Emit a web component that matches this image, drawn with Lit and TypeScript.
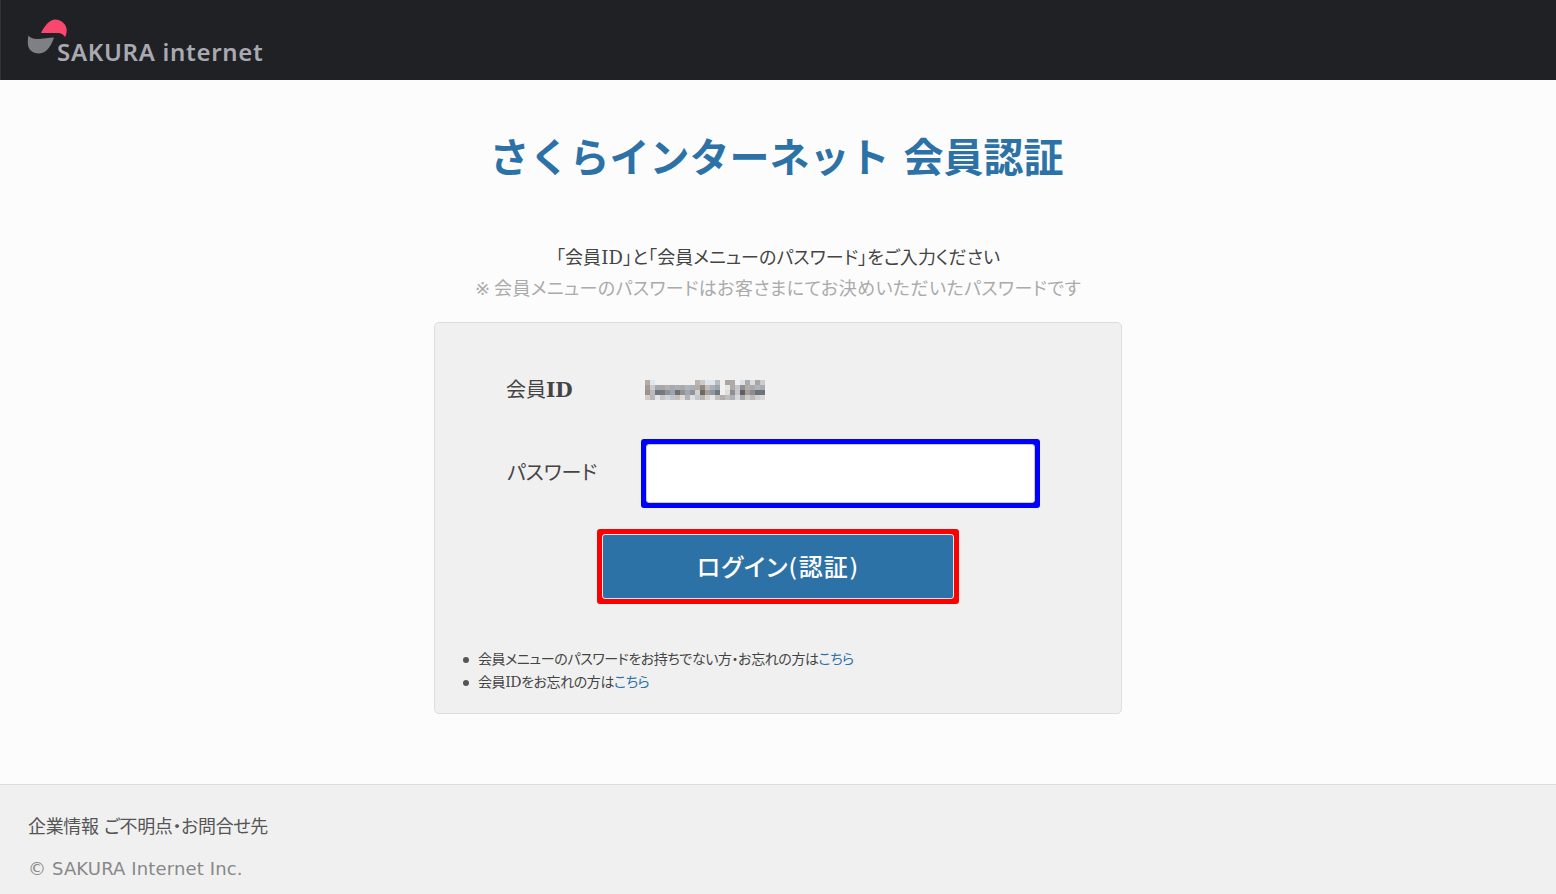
import { LitElement, html, css, svg } from "lit";
import { customElement } from "lit/decorators.js";

const MOSAIC: string[][] = [
  "b5aba4 dde6ee f0f0f0 f0f0f0 f0f0f0 f0f0f0 f0f0f0 f0f0f0 f0f0f0 f0f0f0 bdb3ad c9c9c8 dfe5ea dfe5ea b5bcc4 f0f0f0 aba5a0 b0aaa6 f0f0f0 e0e0e0 a5adb4 dcdcdc a9a5a2 c8cdd2".split(" "),
  "a39a94 c9cccd a2a8ad a9a7a6 b4b0ac a5aab0 b2aeaa a6abb0 b3b5b8 a9b0b7 b3aba4 8f8a86 c4bcb5 a8b0b8 a0a4a8 f0f0f0 e6e6e6 b0aaa6 c4c6c8 8f9094 b5aea8 a9aaac b2b5b8 a8adb4".split(" "),
  "9b928c b8bbbe 6f767d 747a80 8e9298 9ca4ac 6f7074 8f9296 a0a8b0 8e959c d4d0cc 6c6864 a8a098 8c98a4 707880 f0f0f0 e0dcdc 8c8e94 c8c8c8 5c5e64 a89e96 8c8c8e 6c7078 6f747c".split(" "),
  "d2cdc8 b4b6b8 e4e4e4 c8c6c4 d0d4d8 bcc6d0 c8c0b8 e0dcd8 aeb4ba e0e0e0 c4c8cc b8b4b0 d8d4d0 e4e6e8 c4c0bc b0aeac c0bcb8 aeb2b6 d8d8d8 a8a8aa cccccc bcb8b4 d0d0d0 d8d8d8".split(" "),
];

@customElement("app-root")
export class AppRoot extends LitElement {
  static styles = css`
    :host {
      display: flex;
      flex-direction: column;
      min-height: 894px;
      background: #fcfcfc;
      color: #444;
      font-family: "DejaVu Sans", "Noto Sans CJK JP", sans-serif;
      font-feature-settings: "palt";
    }
    .top {
      height: 80px;
      box-sizing: border-box;
      background: #202124;
      border-left: 1px solid #333;
      position: relative;
    }
    .logo-mark {
      position: absolute;
      left: -1px;
      top: 0;
    }
    .logo-text {
      position: absolute;
      left: 56px;
      top: 38px;
      font-size: 24px;
      line-height: 28px;
      font-weight: 600;
      color: #a9a9b2;
      font-family: "Noto Sans", sans-serif;
      white-space: nowrap;
      letter-spacing: 0.7px;
    }
    main {
      flex: 1;
      display: flex;
      flex-direction: column;
      align-items: center;
    }
    h1 {
      margin: 50px 3px 0 0;
      height: 56px;
      font-size: 40px;
      line-height: 56px;
      font-weight: 700;
      color: #2d72a7;
      white-space: nowrap;
      font-feature-settings: normal;
    }
    .intro {
      margin: 56px 0 0;
      font-size: 18px;
      line-height: 31px;
      text-align: center;
      white-space: nowrap;
      letter-spacing: 0.1px;
    }
    .intro .note {
      color: #aaa;
      display: block;
      letter-spacing: 0.42px;
    }
    .mark {
      letter-spacing: 4px;
    }
    .id {
      font-family: "DejaVu Serif", serif;
    }
    .panel {
      box-sizing: border-box;
      width: 688px;
      height: 392px;
      margin-top: 18px;
      background: #f0f0f0;
      border: 1px solid #ddd;
      border-radius: 5px;
      display: flex;
      flex-direction: column;
      padding: 49px 0 0 71px;
    }
    .row {
      display: grid;
      grid-template-columns: 135px 1fr;
      align-items: center;
      font-size: 20px;
      line-height: 36px;
    }
    .row b {
      font-family: "DejaVu Serif", serif;
      font-weight: 700;
    }
    .pw-label {
      margin: 0 0 2px 1px;
    }
    .mosaic {
      display: grid;
      grid-template-columns: repeat(24, 5px);
      grid-auto-rows: 5px;
      width: 120px;
      margin-left: 4px;
    }
    .input-row {
      margin-top: 31px;
    }
    .frame {
      border-radius: 3px;
      padding: 5px;
      justify-self: start;
    }
    .frame.blue {
      background: #00f;
    }
    .frame.red {
      background: #f00;
    }
    .input {
      box-sizing: border-box;
      width: 389px;
      height: 59px;
      background: #fff;
      border: 1px solid #ccc;
      border-radius: 3px;
      display: block;
      padding: 0;
      outline: none;
    }
    .btn-row {
      display: flex;
      margin: 21px 0 0 91px;
    }
    .btn {
      box-sizing: border-box;
      display: block;
      width: 352px;
      height: 65px;
      background: #2d72a7;
      border: 1px solid #e6e6e6;
      border-radius: 3px;
      color: #fff;
      font-family: inherit;
      font-feature-settings: inherit;
      font-size: 24px;
      font-weight: 500;
      letter-spacing: 1px;
      padding: 0 0 2px;
    }
    ul {
      margin: 44px 0 0 -43px;
      padding: 0;
      font-size: 14px;
      line-height: 23px;
      color: #444;
      list-style: none;
      letter-spacing: -0.42px;
    }
    li {
      display: flex;
      align-items: center;
      gap: 9px;
    }
    li::before {
      content: "";
      width: 6px;
      height: 6px;
      border-radius: 50%;
      background: #555;
    }
    a {
      color: #2d72a7;
      text-decoration: none;
    }
    footer {
      box-sizing: border-box;
      height: 110px;
      background: #f0f0f0;
      border-top: 1px solid #ddd;
      padding: 27px 0 0 28px;
    }
    .links {
      font-size: 18px;
      line-height: 30px;
      color: #555;
      letter-spacing: -0.35px;
    }
    .copy {
      margin-top: 12px;
      font-size: 18px;
      line-height: 30px;
      color: #888;
      white-space: nowrap;
      letter-spacing: 0.14px;
    }
  `;

  private logo() {
    return html`<svg class="logo-mark" width="80" height="60" viewBox="0 0 80 60">
      ${svg`<path fill="#f9476f" d="M41 33 C45 25 50 19.5 55 19.5 C62 19.5 66.7 25 66.7 30 C66.7 33 66 35.5 65 37 C63.5 35 61.5 33.3 59 33 C53 32.6 47 33.4 41 33 Z"/>`}
      ${svg`<path fill="#7f7f86" d="M28.5 35.5 C30 37.5 33 39 37 39 C43 39 49 37.5 54 37.5 C52 44 47 53.5 39 53.5 C32 53.5 27.8 49 27.8 43 C27.8 40 28 37.5 28.5 35.5 Z"/>`}
    </svg>`;
  }

  render() {
    return html`
      <header class="top">
        ${this.logo()}
        <span class="logo-text">SAKURA internet</span>
      </header>
      <main>
        <h1>さくらインターネット 会員認証</h1>
        <p class="intro">「会員<span class="id">ID</span>」と「会員メニューのパスワード」をご入力ください<span class="note"><span class="mark">※</span>会員メニューのパスワードはお客さまにてお決めいただいたパスワードです</span></p>
        <section class="panel">
          <div class="row">
            <span>会員<b>ID</b></span>
            <div class="mosaic">
              ${MOSAIC.flat().map((c) => html`<i style="background:#${c}"></i>`)}
            </div>
          </div>
          <div class="row input-row">
            <span class="pw-label">パスワード</span>
            <div class="frame blue"><input class="input" type="password" aria-label="パスワード" /></div>
          </div>
          <div class="btn-row"><div class="frame red"><button class="btn">ログイン(認証)</button></div></div>
          <ul>
            <li><span>会員メニューのパスワードをお持ちでない方・お忘れの方は<a href="#">こちら</a></span></li>
            <li><span>会員<span class="id">ID</span>をお忘れの方は<a href="#">こちら</a></span></li>
          </ul>
        </section>
      </main>
      <footer>
        <div class="links">企業情報 ご不明点・お問合せ先</div>
        <div class="copy">© SAKURA Internet Inc.</div>
      </footer>
    `;
  }
}
